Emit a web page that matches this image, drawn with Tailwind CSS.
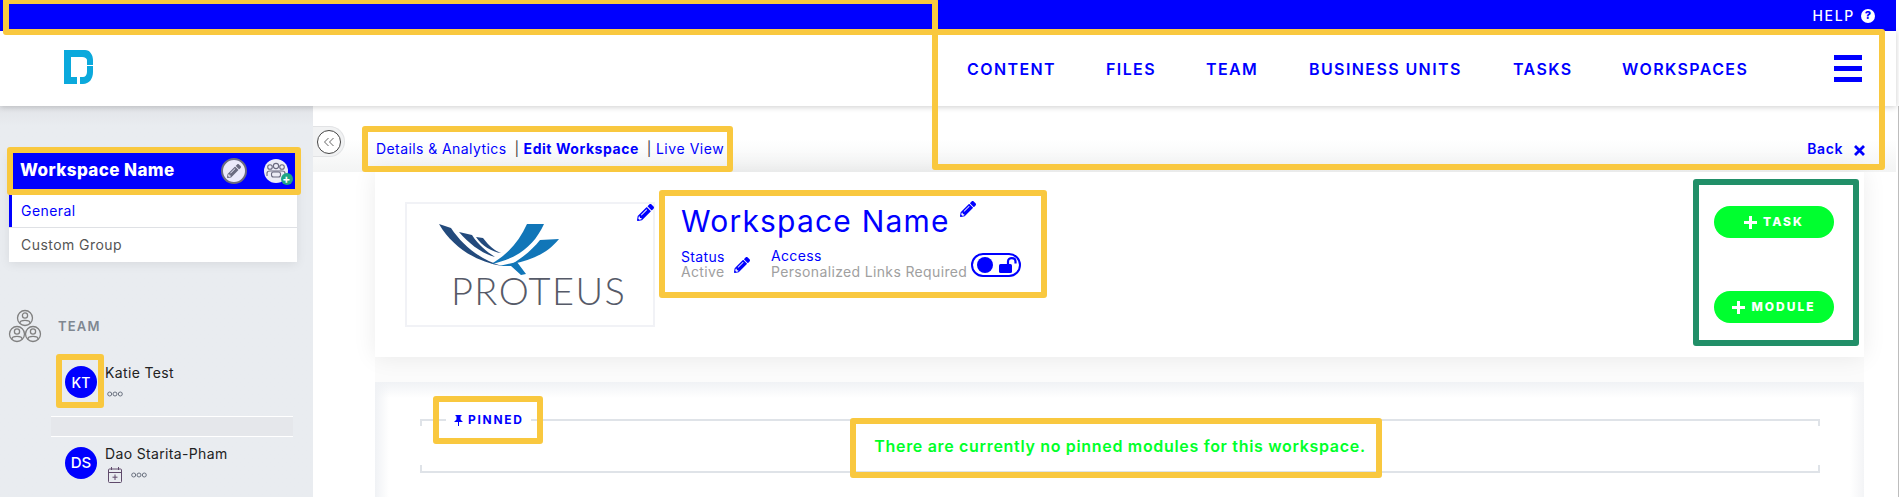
<!DOCTYPE html>
<html lang="en">
<head>
    <meta charset="UTF-8">
    <meta name="viewport" content="width=device-width, initial-scale=1.0">
    <title>Edit Workspace</title>
    <script src="https://cdn.jsdelivr.net/npm/@tailwindcss/browser@4"></script>
</head>
<body class="bg-white font-['Inter',sans-serif] overflow-hidden">
    <svg class="hidden">
        <symbol id="pencil" viewBox="0 0 512 512"><path fill="currentColor" d="M497.9 142.1l-46.1 46.1c-4.7 4.7-12.3 4.7-17 0l-111-111c-4.7-4.7-4.7-12.3 0-17l46.1-46.1c18.7-18.7 49.1-18.7 67.9 0l60.1 60.1c18.8 18.7 18.8 49.1 0 67.9zM284.2 99.8L21.6 362.4.4 483.9c-2.9 16.4 11.4 30.6 27.8 27.8l121.5-21.3 262.6-262.6c4.7-4.7 4.7-12.3 0-17l-111-111c-4.8-4.7-12.4-4.7-17.1 0zM124.1 339.9c-5.5-5.5-5.5-14.3 0-19.8l154-154c5.5-5.5 14.3-5.5 19.8 0s5.5 14.3 0 19.8l-154 154c-5.5 5.5-14.3 5.5-19.8 0zM88 424h48v36.3l-64.5 11.3-31.1-31.1L51.7 376H88v48z"/></symbol>
        <symbol id="dots" viewBox="0 0 16 6"><g fill="none" stroke="#6b7280" stroke-width="1"><circle cx="2.7" cy="3" r="2"/><circle cx="8" cy="3" r="2"/><circle cx="13.3" cy="3" r="2"/></g></symbol>
        <symbol id="plus" viewBox="0 0 13 13"><path d="M6.500 0V13M0 6.500H13" stroke="#fff" stroke-width="3"/></symbol>
    </svg>

    <div class="relative w-[1899px] h-[497px] overflow-hidden flex flex-col">
        <!-- top bar -->
        <div class="h-[31px] w-[1896px] bg-[#0000ff] flex items-center justify-end pr-[21px] gap-[6px] text-white shrink-0">
            <span class="text-[14px] tracking-[1.7px] font-medium">HELP</span>
            <span class="w-[14px] h-[14px] rounded-full bg-white text-[#0000ff] text-[11px] font-extrabold flex items-center justify-center">?</span>
        </div>

        <!-- header -->
        <header class="h-[75px] w-[1896px] bg-white shadow-[0_1px_6px_rgba(0,0,0,0.2)] flex items-center pl-[64px] shrink-0 relative z-10">
            <svg width="30" height="34" viewBox="0 0 30 34" class="mt-[-3px]" fill="#0ba9dc">
                <path d="M0 0H21C26 0 29 5 29 10V15H23V10C23 8.500 21 7 18 7H7V27H13V34H0Z"/>
                <path d="M23 16H29V22C29 29 25 34 19 34H16V27H19C21 27 23 25 23 22Z"/>
            </svg>
            <nav class="ml-auto flex items-center text-[#0000ff] text-[16px] font-semibold tracking-[1.4px]">
                <a class="w-[88px]">CONTENT</a>
                <a class="ml-[51px] w-[50px]">FILES</a>
                <a class="ml-[50px] w-[52px]">TEAM</a>
                <a class="ml-[51px] w-[153px] whitespace-nowrap">BUSINESS UNITS</a>
                <a class="ml-[51px] w-[58px]">TASKS</a>
                <a class="ml-[51px] w-[129px]">WORKSPACES</a>
            </nav>
            <div class="ml-[83px] mr-[34px] w-[28px] flex flex-col gap-[6px] mt-[-1px]">
                <div class="h-[5px] bg-[#0000ff]"></div>
                <div class="h-[5px] bg-[#0000ff]"></div>
                <div class="h-[5px] bg-[#0000ff]"></div>
            </div>
        </header>

        <div class="flex flex-1 min-h-0">
            <!-- sidebar -->
            <aside class="w-[313px] bg-[#e9ecf0] shrink-0 relative pt-[47px] bg-gradient-to-b from-[#e2e4e8] to-[#e9ecf0] to-[20px]">
                <div class="mx-[9px] w-[288px] bg-white shadow-[0_2px_10px_rgba(0,0,0,0.08)]">
                    <div class="h-[42px] pb-[6px] bg-[#0000ff] flex items-center pl-[11px] text-white text-[17px] font-extrabold tracking-[0.4px]">
                        <span>Workspace Name</span>
                        <span class="ml-[46px] w-[26px] h-[26px] rounded-full bg-[#ebe9fb] border-2 border-[#6b6b80] flex items-center justify-center text-[#6b6b80]">
                            <svg width="14" height="14"><use href="#pencil"/></svg>
                        </span>
                        <span class="relative ml-[17px] w-[24px] h-[24px] rounded-full bg-[#ececf6] flex items-center justify-center">
                            <svg width="20" height="18" viewBox="0 0 20 18" fill="none" stroke="#6b6b80" stroke-width="1.100">
                                <circle cx="4" cy="5" r="2.300"/><circle cx="10" cy="4" r="2.600"/><circle cx="16" cy="5" r="2.300"/>
                                <path d="M1 14V11C1 9.500 2 9 4 9H16C18 9 19 9.500 19 11V14"/><rect x="5.500" y="10" width="9" height="5" rx="2"/>
                            </svg>
                            <span class="absolute right-[-5px] bottom-[-2px] w-[12px] h-[12px] rounded-full bg-[#1fa584] text-white text-[12px] leading-[11px] font-bold text-center">+</span>
                        </span>
                    </div>
                    <div class="h-[32px] pb-[2px] border-l-[3px] border-[#0000ff] pl-[9px] flex items-center text-[14px] text-[#0000ff] tracking-[0.45px]">General</div>
                    <div class="h-px bg-[#dfe1e5]"></div>
                    <div class="h-[34px] pb-[2px] pl-[12px] flex items-center text-[14px] text-[#555] tracking-[0.45px]">Custom Group</div>
                </div>

                <div class="mt-[47px] pl-[8px] flex items-center">
                    <svg width="34" height="34" viewBox="0 0 34 34" fill="none" stroke="#808080" stroke-width="1.300">
                        <circle cx="17" cy="9" r="7.500"/><circle cx="17" cy="6.500" r="2.600"/><path d="M12 14C12 10.500 22 10.500 22 14"/>
                        <circle cx="9" cy="25" r="7.500"/><circle cx="9" cy="22.500" r="2.600"/><path d="M4 30C4 26.500 14 26.500 14 30"/>
                        <circle cx="25" cy="25" r="7.500"/><circle cx="25" cy="22.500" r="2.600"/><path d="M20 30C20 26.500 30 26.500 30 30"/>
                    </svg>
                    <span class="ml-[16px] mt-[1px] text-[13px] font-semibold text-[#7f8791] tracking-[1.2px]">TEAM</span>
                </div>

                <div class="mt-[23px] ml-[65px] h-[32px] flex">
                    <div class="w-[32px] h-[32px] rounded-full bg-[#0000ff] text-white text-[14px] font-medium flex items-center justify-center">KT</div>
                    <div class="ml-[8px] -mt-[2px]">
                        <div class="h-[18px] text-[14px] text-[#222] tracking-[0.35px] leading-[18px]">Katie Test</div>
                        <svg class="mt-[9px] ml-[2px]" width="16" height="6"><use href="#dots"/></svg>
                    </div>
                </div>
                <div class="mt-[18px] ml-[51px] w-[242px] h-[21px] border-y border-white bg-[#e5e7eb]"></div>
                <div class="mt-[10px] ml-[65px] flex">
                    <div class="w-[32px] h-[32px] rounded-full bg-[#0000ff] text-white text-[15px] font-medium flex items-center justify-center">DS</div>
                    <div class="ml-[8px] -mt-[2px]">
                        <div class="h-[18px] text-[14px] text-[#222] tracking-[0.35px] leading-[18px] whitespace-nowrap">Dao Starita-Pham</div>
                        <div class="flex items-center mt-[4px] ml-[3px]">
                            <svg width="14" height="16" viewBox="0 0 14 16" fill="none" stroke="#5f4a6b" stroke-width="1"><rect x=".5" y="2" width="13" height="13.500" rx="1"/><path d="M.5 5.500H13.500M3.500 0V3M10.500 0V3M7 7.500V13M4.500 10.200H9.500"/></svg>
                            <svg class="ml-[9px]" width="16" height="6"><use href="#dots"/></svg>
                        </div>
                    </div>
                </div>
            </aside>

            <!-- main -->
            <main class="relative flex-1 pl-[62px] pr-[32px] bg-white">
                <div class="absolute inset-x-0 top-0 h-[66px] bg-gradient-to-b from-white via-white to-[#f3f4f4]"></div>
                <div class="absolute left-[62px] right-[32px] top-[251px] h-[25px] bg-[#fbfbfb]"></div>

                <!-- collapse tab -->
                <div class="absolute left-0 top-[20px] w-[32px] h-[31px] rounded-r-full bg-[#f1f2f3] border border-l-0 border-[#e2e3e5] flex items-center pl-[4px] z-10">
                    <span class="w-[24px] h-[24px] rounded-full border border-[#444] bg-white flex items-center justify-center">
                        <svg width="12" height="10" viewBox="0 0 12 10" fill="none" stroke="#666" stroke-width="1"><path d="M5.500 1L1.500 5L5.500 9M10.500 1L6.500 5L10.500 9"/></svg>
                    </span>
                </div>

                <div class="relative h-[66px] flex items-end pb-[13px] pl-px text-[14px] text-[#0000ff] tracking-[0.42px]">
                    <a>Details &amp; Analytics</a>
                    <span class="ml-[8px] text-[#444]">|</span>
                    <a class="ml-[4px] font-bold tracking-[0.55px]">Edit Workspace</a>
                    <span class="ml-[8px] text-[#444]">|</span>
                    <a class="ml-[4px] tracking-[0.55px]">Live View</a>
                    <a class="ml-auto font-semibold tracking-[0.6px]">Back</a>
                    <svg class="ml-[11px] mb-[3px] mr-[-1px]" width="11" height="11" viewBox="0 0 11 11" stroke="#0000ff" stroke-width="2.800"><path d="M1 1L10 10M10 1L1 10"/></svg>
                </div>

                <!-- workspace card -->
                <section class="relative h-[185px] bg-white shadow-[0_0_22px_rgba(0,0,0,0.08)] flex pl-[30px] pt-[30px] pr-[30px]">
                    <div class="relative w-[250px] h-[125px] border-2 border-[#f1f2f6]">
                        <svg class="absolute left-[32px] top-[20px]" width="125" height="52" viewBox="0 0 125 52">
                            <path d="M0 0L12 4C24 22 42 36 63 42C38 38 14 24 0 0Z" fill="#234a7c"/>
                            <path d="M20 8L33 11C40 22 50 29 56 33C44 30 30 20 20 8Z" fill="#234a7c"/>
                            <path d="M37 13L44 14C50 22 56 27 62 29C53 28 43 22 37 13Z" fill="#234a7c"/>
                            <path d="M88 0H105C95 22 78 35 52 40C68 31 80 18 88 0Z" fill="#1176b8"/>
                            <path d="M101 16L120 15C108 30 92 36 73 40C83 34 93 26 101 16Z" fill="#1176b8"/>
                            <path d="M60 42L78 38L87 50L82 51L72 42Z" fill="#1176b8"/>
                        </svg>
                        <div class="absolute left-[44px] top-[63px] text-[38px] leading-[46px] tracking-[1.4px] font-['Lato',sans-serif] font-light text-[#565a68]">PROTEUS</div>
                        <svg class="absolute right-[-1px] top-[0px] text-[#0000ff]" width="17" height="17"><use href="#pencil"/></svg>
                    </div>

                    <div class="ml-[26px]">
                        <div class="flex h-[38px]">
                            <h1 class="text-[30px] leading-[38px] text-[#0000ff] tracking-[1.2px] whitespace-nowrap">Workspace Name</h1>
                            <svg class="ml-[10px] mt-[-1px] text-[#0000ff]" width="16" height="16"><use href="#pencil"/></svg>
                        </div>
                        <div class="mt-[9px] flex text-[14px] leading-[15px] tracking-[0.35px]">
                            <div class="w-[61px] relative">
                                <div class="text-[#0000ff]">Status</div>
                                <div class="text-[#a0a0a0]">Active</div>
                                <svg class="absolute left-[53px] top-[8px] text-[#0000ff]" width="16" height="16"><use href="#pencil"/></svg>
                            </div>
                            <div class="ml-[29px] -mt-px">
                                <div class="text-[#0000ff]">Access</div>
                                <div class="text-[#a0a0a0] whitespace-nowrap mt-px">Personalized Links Required</div>
                            </div>
                            <div class="ml-[4px] mt-[4px] w-[50px] h-[24px] rounded-full border-[2.5px] border-[#0000ff] flex items-center pl-[4px]">
                                <span class="w-[16px] h-[16px] rounded-full bg-[#0000ff]"></span>
                                <svg class="ml-[6px]" width="18" height="16" viewBox="0 0 18 16"><rect x="0" y="7" width="13" height="9" rx="1.500" fill="#0000ff"/><path d="M9 7V4.500C9 0 16.500 0 16.500 4.500V6.500" fill="none" stroke="#0000ff" stroke-width="2.200"/></svg>
                            </div>
                        </div>
                    </div>

                    <div class="ml-auto flex flex-col gap-[53px] mt-[4px] text-white text-[12px] font-extrabold tracking-[2px]">
                        <button class="w-[120px] h-[32px] rounded-full bg-[#00ff2f] flex items-center justify-center gap-[6px]">
                            <svg width="13" height="13"><use href="#plus"/></svg><span>TASK</span>
                        </button>
                        <button class="w-[120px] h-[32px] rounded-full bg-[#00ff2f] flex items-center justify-center gap-[6px]">
                            <svg width="13" height="13"><use href="#plus"/></svg><span>MODULE</span>
                        </button>
                    </div>
                </section>

                <!-- pinned -->
                <section class="relative mt-[25px] h-[115px] bg-gradient-to-b from-[#f0f2f5] to-white to-[16px] pl-[45px] pr-[44px] pt-[37px]">
                    <div class="absolute left-0 top-0 bottom-0 w-[14px] bg-gradient-to-r from-[#f0f2f5] to-transparent"></div>
                    <div class="absolute right-0 top-0 bottom-0 w-[14px] bg-gradient-to-l from-[#f3f4f6] to-transparent"></div>
                    <div class="relative h-[54px] border-y-2 border-[#dfe3e8] flex items-center justify-center">
                        <i class="absolute left-0 top-0 w-[2px] h-[5px] bg-[#dfe3e8]"></i>
                        <i class="absolute right-0 top-0 w-[2px] h-[5px] bg-[#dfe3e8]"></i>
                        <i class="absolute left-0 bottom-0 w-[2px] h-[6px] bg-[#dfe3e8]"></i>
                        <i class="absolute right-0 bottom-0 w-[2px] h-[6px] bg-[#dfe3e8]"></i>
                        <div class="absolute left-[26px] top-[-9px] w-[85px] h-[16px] bg-white flex items-center pl-[8px] text-[#0000ff] text-[12px] font-bold tracking-[1.7px]">
                            <svg width="9" height="11" viewBox="0 0 9 11" fill="#0000ff" class="mr-[5px]"><path d="M1.500 0H7.500V1L6.500 1.500V4.500L9 7H5V11H4V7H0L2.500 4.500V1.500L1.500 1Z"/></svg>
                            PINNED
                        </div>
                        <p class="text-[#00ff2a] text-[16px] font-semibold tracking-[0.68px] whitespace-nowrap -mt-[1px]">There are currently no pinned modules for this workspace.</p>
                    </div>
                </section>
            </main>
            <div class="w-[3px] bg-white border-r border-[#bdbdbd] shrink-0"></div>
        </div>

        <!-- callout boxes drawn over the screenshot -->
        <div class="absolute left-[3px] top-[-2px] w-[935px] h-[37px] border-[6px] border-[#f9c83f] rounded-[3px] z-20"></div>
        <div class="absolute left-[932px] top-[29px] w-[953px] h-[141px] border-[6px] border-[#f9c83f] rounded-[3px] z-20"></div>
        <div class="absolute left-[7px] top-[147px] w-[294px] h-[48px] border-[6px] border-[#f9c83f] rounded-[3px] z-20"></div>
        <div class="absolute left-[362px] top-[126px] w-[371px] h-[46px] border-[6px] border-[#f9c83f] rounded-[3px] z-20"></div>
        <div class="absolute left-[659px] top-[190px] w-[388px] h-[108px] border-[6px] border-[#f9c83f] rounded-[3px] z-20"></div>
        <div class="absolute left-[1693px] top-[179px] w-[166px] h-[167px] border-[6px] border-[#218f68] rounded-[3px] z-20"></div>
        <div class="absolute left-[56px] top-[354px] w-[48px] h-[54px] border-[6px] border-[#f9c83f] rounded-[3px] z-20"></div>
        <div class="absolute left-[433px] top-[396px] w-[110px] h-[48px] border-[6px] border-[#f9c83f] rounded-[3px] z-20"></div>
        <div class="absolute left-[850px] top-[418px] w-[532px] h-[60px] border-[6px] border-[#f9c83f] rounded-[3px] z-20"></div>
    </div>
</body>
</html>
